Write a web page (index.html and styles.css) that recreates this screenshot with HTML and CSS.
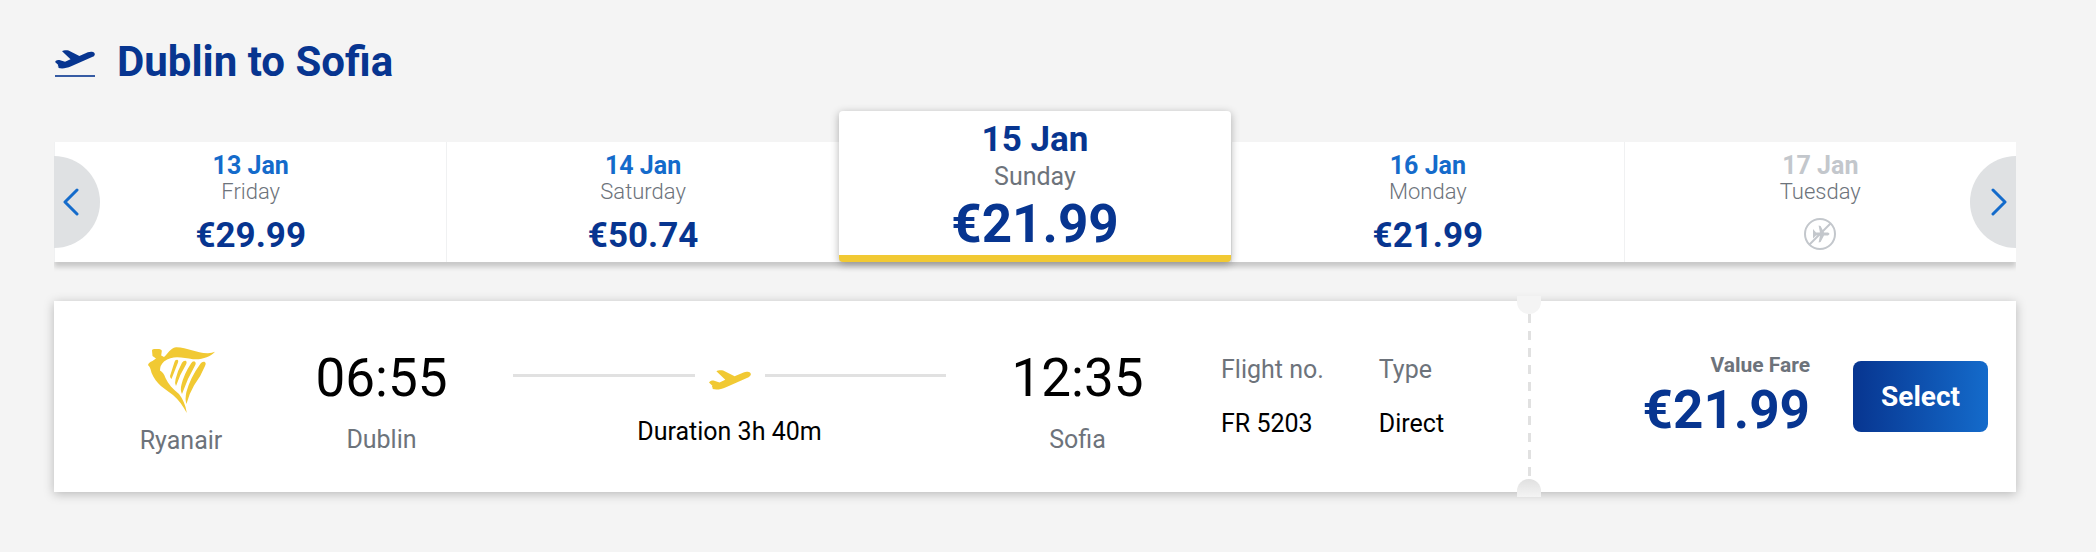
FILE: index.html
```html
<!DOCTYPE html>
<html lang="en">
<head>
    <meta charset="UTF-8">
    <meta name="viewport" content="width=device-width, initial-scale=1.0">
    <title>Dublin to Sofia</title>
    <link rel="stylesheet" href="styles.css">
</head>
<body>
    <svg class="sprite" aria-hidden="true">
        <symbol id="plane" viewBox="0 0 42 20">
            <path d="M0 12.5 C1 10.8 3 10.6 4.5 10.6 L10.5 12.4 L16.3 9.8 L7.4 1.2 C9 0.2 12 0 14.2 0.6 L25.6 6.2 L34.5 2.4 C37 1.5 40 1.6 41.2 2.8 C42.6 4.4 41.6 6.2 39.6 7.2 L17 17.2 C12 19.4 7.5 20 3.6 19 L3.8 17.4 L2.8 17.2 L3.4 15.8 Z"/>
        </symbol>
    </svg>

    <main class="container">
        <header class="route">
            <svg class="route-icon" viewBox="0 0 40 28">
                <use href="#plane" x="0" y="0" width="40" height="19"/>
                <path class="runway" d="M0 26 H40"/>
            </svg>
            <h1>Dublin to Sofia</h1>
        </header>

        <!-- Dates -->
        <nav class="dates" aria-label="Dates">
            <button class="arrow arrow-prev" aria-label="Previous dates">
                <svg viewBox="0 0 16 28"><path d="M14 2 L2 14 L14 26"/></svg>
            </button>
            <button class="date">
                <span class="day">13 Jan</span>
                <span class="weekday">Friday</span>
                <span class="fare">€29.99</span>
            </button>
            <button class="date">
                <span class="day">14 Jan</span>
                <span class="weekday">Saturday</span>
                <span class="fare">€50.74</span>
            </button>
            <button class="date selected" aria-current="date">
                <span class="day">15 Jan</span>
                <span class="weekday">Sunday</span>
                <span class="fare">€21.99</span>
            </button>
            <button class="date">
                <span class="day">16 Jan</span>
                <span class="weekday">Monday</span>
                <span class="fare">€21.99</span>
            </button>
            <button class="date unavailable" disabled>
                <span class="day">17 Jan</span>
                <span class="weekday">Tuesday</span>
                <svg class="no-flight" viewBox="0 0 32 32">
                    <circle cx="16" cy="16" r="15"/>
                    <path class="jet" d="M9 11 L12 14.6 L16 14.4 L14.6 7.6 L16.6 8 L20 14.4 L24 14.6 Q27 16 24 17.4 L20 17.6 L16.6 24 L14.6 24.4 L16 17.6 L12 17.4 L9 20.5 Z"/>
                    <path d="M5.5 26.5 L26.5 5.5"/>
                </svg>
            </button>
            <button class="arrow arrow-next" aria-label="Next dates">
                <svg viewBox="0 0 16 28"><path d="M2 2 L14 14 L2 26"/></svg>
            </button>
        </nav>

        <!-- Flight -->
        <section class="flight">
            <div class="carrier">
                <svg class="harp" viewBox="0 0 67 66">
                    <path d="M4 3.5 C4 2 5.5 2.2 8 2 C11 1.8 13.8 2 13.8 4 L13.2 8.6 L16 10 C20 7 22 1 28 0.2 C39 0 49 6.5 60 6.2 Q64 6 67 4.8 C62 10 54 13 45 12.2 C35 11 25 7.5 16 14.5 Q12 18 12 23.5 C14.5 25 16 27 17.5 31 C20 37 25 42 31 47 C35 52 37.5 58 38.8 66 C35 59 31 53 25 48 C17 42 8 37 3.6 26 C2.5 22 2.4 20.5 0 18 Q0.6 15.5 4.5 14 L8 11.6 L4.5 9 Z"/>
                    <path d="M26.5 15 Q27 12.8 29 12.8 Q31 13.2 29.8 16 L23.5 32 Q22 31 22 29 Z"/>
                    <path d="M34 15.8 Q35.5 13.4 37.6 13.8 Q39.4 14.8 38 17.4 Q32 27 28 39 Q26.4 36 27.6 32 Q29.5 24 34 15.8 Z"/>
                    <path d="M43 16.5 Q44.5 14 46.6 14.4 Q48.6 15.4 47 18.4 Q39 32 34 47 Q32 43 33.4 38 Q36 27 43 16.5 Z"/>
                    <path d="M52.6 16.4 Q54 14.4 56.4 14.8 Q58.6 15.8 57 19 Q53 29 46 38.5 Q41 47 38.4 57 Q36.8 52 38.4 45 Q42 31 52.6 16.4 Z"/>
                </svg>
                <span class="label">Ryanair</span>
            </div>
            <div class="stop">
                <time class="time">06:55</time>
                <span class="label">Dublin</span>
            </div>
            <div class="journey">
                <div class="track">
                    <svg class="track-icon" viewBox="0 0 42 20"><use href="#plane"/></svg>
                </div>
                <span class="duration">Duration 3h 40m</span>
            </div>
            <div class="stop">
                <time class="time">12:35</time>
                <span class="label">Sofia</span>
            </div>
            <dl class="details">
                <div>
                    <dt>Flight no.</dt>
                    <dd>FR 5203</dd>
                </div>
                <div>
                    <dt>Type</dt>
                    <dd>Direct</dd>
                </div>
            </dl>
            <div class="tear"></div>
            <div class="purchase">
                <div class="price">
                    <span class="price-label">Value Fare</span>
                    <span class="price-value">€21.99</span>
                </div>
                <button class="select">Select</button>
            </div>
        </section>
    </main>
</body>
</html>
```
FILE: styles.css
```css
:root {
    --navy: #073590;
    --blue: #146bcb;
    --yellow: #f1c933;
    --grey: #6d737b;
    --light-grey: #c3c7cc;
    --line: #e1e1e1;
    --background: #f4f4f4;
}

* {
    box-sizing: border-box;
}

body {
    margin: 0;
    background-color: var(--background);
    color: #000;
    font-family: Roboto, "Liberation Sans", sans-serif;
    font-size: 25px;
    line-height: 32px;
}

button {
    border: none;
    padding: 0;
    font-family: inherit;
    cursor: pointer;
}

.sprite {
    position: absolute;
    width: 0;
    height: 0;
}

.container {
    padding: 37px 80px 60px 54px;
}

.route {
    display: flex;
    align-items: center;
    gap: 22px;
    color: var(--navy);
}

.route-icon {
    width: 40px;
    height: 28px;
    margin-left: 1px;
    margin-top: 4px;
    fill: currentColor;
}

.runway {
    stroke: currentColor;
    stroke-width: 2;
    opacity: 0.8;
}

h1 {
    margin: 0;
    font-size: 42px;
    line-height: 50px;
    font-weight: bold;
}

/* Dates */
.dates {
    position: relative;
    display: grid;
    grid-template-columns: repeat(5, 1fr);
    align-items: end;
    margin-top: 24px;
    box-shadow: 0 5px 5px rgba(0, 0, 0, 0.18);
    clip-path: inset(-10px 0 -14px);
}

.date {
    display: flex;
    flex-direction: column;
    align-items: center;
    height: 120px;
    padding-top: 10px;
    background-color: white;
    border-left: 1px solid #f0f1f2;
    color: var(--navy);
}

.day {
    color: var(--blue);
    font-size: 25px;
    line-height: 28px;
    font-weight: bold;
}

.weekday {
    color: var(--grey);
    font-size: 22px;
    line-height: 24px;
    font-weight: 300;
}

.fare {
    margin-top: 11px;
    font-size: 35px;
    line-height: 42px;
    font-weight: bold;
}

.selected {
    position: relative;
    height: auto;
    padding-top: 9px;
    border-left: none;
    border-bottom: 7px solid var(--yellow);
    border-radius: 4px;
    box-shadow: 0 2px 8px rgba(0, 0, 0, 0.3);
}

.selected .day {
    color: var(--navy);
    font-size: 35px;
    line-height: 40px;
}

.selected .weekday {
    font-size: 25px;
    line-height: 34px;
    font-weight: normal;
}

.selected .fare {
    margin-top: 0;
    font-size: 53px;
    line-height: 61px;
}

.unavailable {
    cursor: default;
}

.unavailable .day {
    color: var(--light-grey);
}

.no-flight {
    width: 32px;
    height: 32px;
    margin-top: 14px;
    fill: none;
    stroke: var(--light-grey);
    stroke-width: 2;
}

.no-flight .jet {
    fill: var(--light-grey);
    stroke: none;
}

.arrow {
    position: absolute;
    bottom: 14px;
    z-index: 1;
    display: flex;
    align-items: center;
    width: 46px;
    height: 92px;
    background-color: #dfe1e3;
}

.arrow-prev {
    left: 0;
    padding-left: 9px;
    border-radius: 0 46px 46px 0;
}

.arrow-next {
    right: 0;
    justify-content: flex-end;
    padding-right: 9px;
    border-radius: 46px 0 0 46px;
}

.arrow svg {
    width: 16px;
    height: 28px;
    fill: none;
    stroke: var(--blue);
    stroke-width: 3;
    stroke-linecap: round;
    stroke-linejoin: round;
}

/* Flight */
.flight {
    display: flex;
    align-items: stretch;
    margin-top: 39px;
    padding-left: 58px;
    background-color: white;
    box-shadow: 0 2px 10px rgba(0, 0, 0, 0.25);
}

.carrier, .stop {
    display: flex;
    flex-direction: column;
    align-items: center;
}

.carrier {
    width: 138px;
    padding-top: 46px;
}

.harp {
    width: 67px;
    height: 66px;
    fill: var(--yellow);
}

.carrier .label {
    margin-top: 12px;
}

.label {
    color: var(--grey);
}

.stop {
    width: 263px;
    padding-top: 45px;
}

.time {
    font-size: 53px;
    line-height: 64px;
}

.stop .label {
    margin-top: 14px;
}

.journey {
    flex: 1;
    padding: 69px 0 44px;
    text-align: center;
}

.track {
    display: flex;
    gap: 14px;
    margin-bottom: 26px;
}

.track::before,
.track::after {
    content: "";
    flex: 1;
    height: 3px;
    margin-top: 4px;
    background-color: var(--line);
}

.track-icon {
    width: 42px;
    height: 20px;
    fill: var(--yellow);
}

.details {
    display: flex;
    gap: 55px;
    width: 319px;
    margin: 0;
    padding: 53px 0 0 12px;
}

dt {
    color: var(--grey);
}

dd {
    margin: 22px 0 0;
}

/* Perforated edge between the flight and its price */
.tear {
    position: relative;
    width: 3px;
    margin: 13px 0;
    background: repeating-linear-gradient(var(--line) 0 9px, transparent 9px 17px);
}

.tear::before,
.tear::after {
    content: "";
    position: absolute;
    left: -11px;
    width: 24px;
    height: 18px;
    background-color: var(--background);
}

.tear::before {
    bottom: 100%;
    border-radius: 0 0 12px 12px;
}

.tear::after {
    top: 100%;
    border-radius: 12px 12px 0 0;
    background-image: linear-gradient(#e0e0e0, transparent);
}

.purchase {
    display: flex;
    align-items: center;
    justify-content: flex-end;
    gap: 43px;
    width: 485px;
    padding: 0 28px 0 20px;
}

.price {
    display: flex;
    flex-direction: column;
    align-items: flex-end;
}

.price-label {
    color: var(--grey);
    font-size: 21px;
    line-height: 26px;
    font-weight: bold;
}

.price-value {
    color: var(--navy);
    font-size: 53px;
    line-height: 64px;
    font-weight: bold;
}

.select {
    padding: 20px 28px;
    border-radius: 8px;
    background: linear-gradient(to right, var(--navy), var(--blue));
    color: white;
    font-size: 28px;
    line-height: 31px;
    font-weight: bold;
}
```
